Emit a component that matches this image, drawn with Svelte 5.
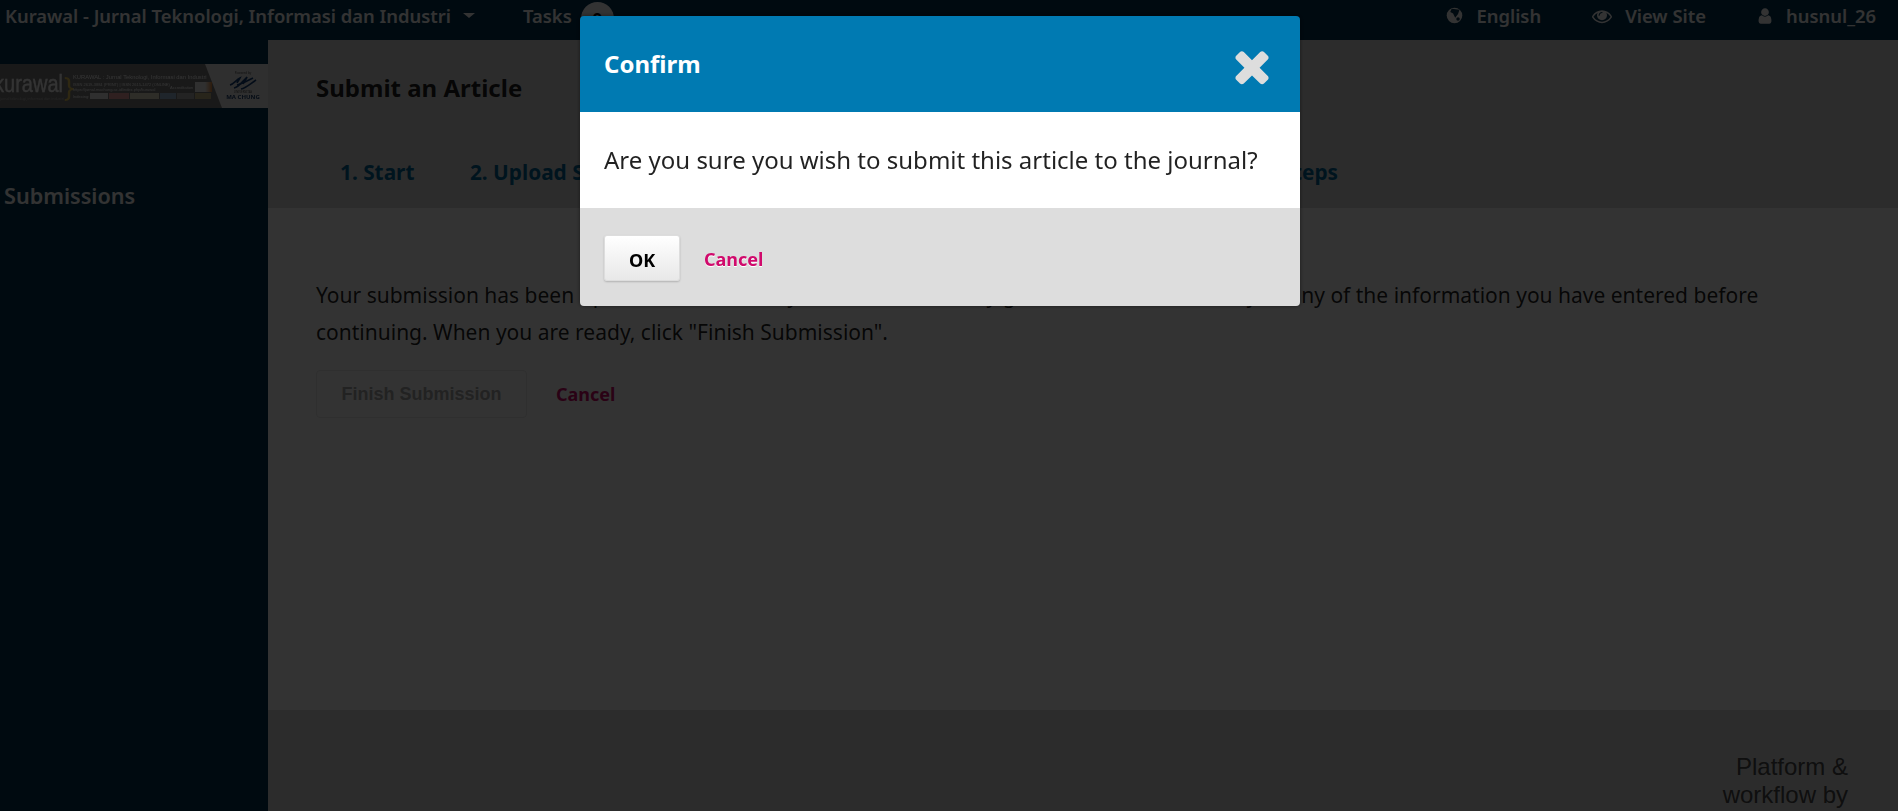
<script>
  let tabs = ["1. Start", "2. Upload Submission", "3. Enter Metadata", "4. Confirmation", "5. Next Steps"];
  let indexers = [
    { color: "#e8e8e8", width: 18 },
    { color: "#e9a0a0", width: 20 },
    { color: "#e4e0c8", width: 29 },
    { color: "#9db8d8", width: 16 },
    { color: "#b0b0b0", width: 17 },
    { color: "#c8b888", width: 16 }
  ];
</script>

<div class="page">
  <header class="topbar">
    <div class="topbar-left">
      <span class="journal">Kurawal - Jurnal Teknologi, Informasi dan Industri</span>
      <span class="caret"></span>
      <span class="tasks">Tasks</span>
      <span class="badge">0</span>
    </div>
    <div class="topbar-right">
      <span class="top-item">
        <svg class="globe" viewBox="0 0 24 24">
          <circle cx="12" cy="12" r="11" fill="#fff" />
          <path d="M8 2.5 L19 4 L17 10 L13 15 L10 9 L6 7 Z" fill="#00334f" />
          <circle cx="17" cy="17" r="2.5" fill="#00334f" />
        </svg>
        English
      </span>
      <span class="top-item site-item">
        <svg class="eye" viewBox="0 0 1792 1792">
          <path fill="#fff" d="M1664 960q-152-236-381-353 61 104 61 225 0 185-131.5 316.5t-316.5 131.5-316.5-131.5-131.5-316.5q0-121 61-225-229 117-381 353 133 205 333.5 326.5t434.5 121.5 434.5-121.5 333.5-326.5zm-720-384q0-20-14-34t-34-14q-125 0-214.5 89.5t-89.5 214.5q0 20 14 34t34 14 34-14 14-34q0-86 61-147t147-61q20 0 34-14t14-34zm848 384q0 34-20 69-140 230-376.5 368.5t-499.5 138.5-499.5-139-376.5-368q-20-35-20-69t20-69q140-229 376.5-368t499.5-139 499.5 139 376.5 368q20 35 20 69z" />
        </svg>
        View Site
      </span>
      <span class="top-item user-item">
        <svg class="user" viewBox="0 0 1792 1792">
          <path fill="#fff" d="M1536 1399q0 109-62.5 187t-150.5 78h-854q-88 0-150.5-78t-62.5-187q0-85 8.5-160.5t31.5-152 58.5-131 94-89 134.5-34.5q131 128 313 128t313-128q76 0 134.5 34.5t94 89 58.5 131 31.5 152 8.5 160.5zm-256-887q0 159-112.5 271.5t-271.5 112.5-271.5-112.5-112.5-271.5 112.5-271.5 271.5-112.5 271.5 112.5 112.5 271.5z" />
        </svg>
        husnul_26
      </span>
    </div>
  </header>

  <div class="layout">
    <aside class="sidebar">
      <div class="banner">
        <div class="banner-brand">
          <span class="banner-word">kurawal</span>
          <span class="banner-tag">jurnal teknologi, informasi dan industri</span>
        </div>
        <span class="banner-brace">&#125;</span>
        <div class="banner-info">
          <span class="banner-title">KURAWAL : Jurnal Teknologi, Informasi dan Industri</span>
          <div class="banner-mid">
            <div class="banner-lines">
              <span class="banner-small">ISSN 2619-3884 (PRINT) | ISSN 2615-1472 (ONLINE)</span>
              <span class="banner-small">https://jurnal.machung.ac.id/index.php/kurawal</span>
            </div>
            <span class="banner-small">Accreditation</span>
            <span class="banner-acc"></span>
          </div>
          <div class="banner-indexers">
            <span class="banner-small">Indexing:</span>
            {#each indexers as item}
              <span class="indexer" style="background: {item.color}; width: {item.width}px"></span>
            {/each}
          </div>
        </div>
        <div class="banner-side">
          <span class="banner-tiny">Powered by</span>
          <svg class="banner-logo" viewBox="0 0 28 15">
            <path d="M1 10 C5 9 7 5 11 3 C10 5 9 6 8 8" />
            <path d="M5 13 C10 12 13 7 18 2 C17 5 15 7 14 9" />
            <path d="M12 14 C17 13 21 9 27 5" />
            <path d="M8 10 C13 9 18 6 24 3" />
          </svg>
          <span class="banner-tiny">UNIVERSITAS</span>
          <span class="banner-school">MA CHUNG</span>
        </div>
      </div>
      <nav class="side-nav">Submissions</nav>
    </aside>

    <main class="main">
      <div class="main-head">
        <h1>Submit an Article</h1>
        <div class="tabs">
          {#each tabs as tab}
            <span class="tab">{tab}</span>
          {/each}
        </div>
      </div>
      <div class="main-body">
        <p>Your submission has been uploaded and is ready to be sent. You may go back to review and adjust any of the information you have entered before continuing. When you are ready, click "Finish Submission".</p>
        <div class="actions">
          <button class="finish" disabled>Finish Submission</button>
          <span class="main-cancel">Cancel</span>
        </div>
      </div>
      <footer class="footer">
        <div class="brand">Platform &amp; workflow by</div>
      </footer>
    </main>
  </div>
</div>

<div class="overlay">
  <div class="modal">
    <div class="modal-head">
      <span>Confirm</span>
      <svg class="close" viewBox="0 0 1792 1792">
        <path fill="#ddd" d="M1490 1322q0 40-28 68l-136 136q-28 28-68 28t-68-28l-294-294-294 294q-28 28-68 28t-68-28l-136-136q-28-28-28-68t28-68l294-294-294-294q-28-28-28-68t28-68l136-136q28-28 68-28t68 28l294 294 294-294q28-28 68-28t68 28l136 136q28 28 28 68t-28 68l-294 294 294 294q28 28 28 68z" />
      </svg>
    </div>
    <div class="modal-body">Are you sure you wish to submit this article to the journal?</div>
    <div class="modal-foot">
      <button class="ok">OK</button>
      <span class="modal-cancel">Cancel</span>
    </div>
  </div>
</div>

<style>
  :global(body) {
    overflow: hidden;
    font-family: "Noto Sans", sans-serif;
  }
  .page {
    height: 100vh;
    display: flex;
    flex-direction: column;
    background: #003250;
    overflow: hidden;
  }
  .topbar {
    height: 40px;
    flex-shrink: 0;
    display: flex;
    justify-content: space-between;
    align-items: center;
    padding: 0 22px 9px 5px;
    box-sizing: border-box;
    color: #fff;
    font-size: 18.4px;
    font-weight: 600;
  }
  .topbar-left,
  .topbar-right {
    display: flex;
    align-items: center;
  }
  .caret {
    margin-left: 12px;
    border-top: 5px solid #fff;
    border-left: 6px solid transparent;
    border-right: 6px solid transparent;
  }
  .tasks {
    margin-left: 48px;
  }
  .badge {
    width: 33px;
    height: 33px;
    margin: 5px 0 0 9px;
    border-radius: 50%;
    background: #fff;
    color: #000;
    display: flex;
    align-items: center;
    justify-content: center;
  }
  .top-item {
    display: flex;
    align-items: center;
    margin-left: 53px;
  }
  .site-item {
    margin-left: 51px;
  }
  .user-item {
    margin-left: 50px;
  }
  .globe {
    width: 17px;
    height: 17px;
    margin-right: 13px;
  }
  .eye {
    width: 20px;
    height: 20px;
    margin-right: 13px;
  }
  .user {
    width: 18px;
    height: 18px;
    margin-right: 12px;
  }
  .layout {
    flex: 1;
    display: flex;
    min-height: 0;
  }
  .sidebar {
    width: 268px;
    flex-shrink: 0;
    padding-top: 24px;
  }
  .banner {
    height: 44px;
    display: flex;
    align-items: center;
    background: #7d7d7d;
    color: #fff;
    overflow: hidden;
    filter: blur(0.4px);
    white-space: nowrap;
  }
  .banner-brand {
    width: 64px;
    flex-shrink: 0;
    display: flex;
    flex-direction: column;
    align-items: flex-end;
    overflow: hidden;
  }
  .banner-word {
    font-family: "Liberation Sans", sans-serif;
    font-size: 20px;
    line-height: 24px;
    margin-right: 1px;
    transform: scaleY(1.15);
    -webkit-text-stroke: 0.3px #fff;
  }
  .banner-tag {
    color: #bbb;
    font-size: 3.5px;
    line-height: 5px;
  }
  .banner-brace {
    color: #e8c85a;
    font-size: 27px;
    line-height: 1;
    width: 9px;
    flex-shrink: 0;
  }
  .banner-info {
    width: 132px;
    flex-shrink: 0;
    display: flex;
    flex-direction: column;
    gap: 1px;
  }
  .banner-title {
    font-family: "Liberation Sans", sans-serif;
    font-size: 5.8px;
    line-height: 8px;
  }
  .banner-mid {
    display: flex;
    align-items: center;
    gap: 2px;
  }
  .banner-lines {
    width: 95px;
    display: flex;
    flex-direction: column;
  }
  .banner-small {
    font-family: "Liberation Sans", sans-serif;
    font-size: 4px;
    line-height: 5px;
  }
  .banner-acc {
    width: 17px;
    height: 10px;
    flex-shrink: 0;
    background: linear-gradient(90deg, #eee 60%, #e08a40);
  }
  .banner-indexers {
    display: flex;
    align-items: center;
    gap: 1px;
  }
  .banner-indexers .banner-small {
    width: 17px;
  }
  .indexer {
    height: 6px;
    flex-shrink: 0;
  }
  .banner-side {
    flex: 1;
    height: 100%;
    background: #e8e8e8;
    clip-path: polygon(0 0, 100% 0, 100% 100%, 17px 100%);
    display: flex;
    flex-direction: column;
    align-items: center;
    justify-content: center;
    padding-left: 13px;
    box-sizing: border-box;
    color: #555;
  }
  .banner-tiny {
    font-size: 3px;
    line-height: 4px;
  }
  .banner-logo {
    width: 28px;
    height: 15px;
    fill: none;
    stroke: #123f78;
    stroke-width: 1.6;
  }
  .banner-school {
    color: #1c3f6f;
    font-size: 6px;
    line-height: 7px;
    font-weight: 700;
  }
  .side-nav {
    margin: 74px 0 0 4px;
    color: #fff;
    font-size: 21.6px;
    line-height: 28px;
    font-weight: 600;
  }
  .main {
    flex: 1;
    min-width: 0;
    display: flex;
    flex-direction: column;
    background: #fff;
    color: rgba(0, 0, 0, 0.87);
  }
  .main-head {
    height: 168px;
    flex-shrink: 0;
    background: #ddd;
    padding-left: 48px;
    box-sizing: border-box;
  }
  h1 {
    margin: 0;
    padding-top: 29px;
    font-size: 24px;
    line-height: 38px;
    font-weight: 700;
  }
  .tabs {
    display: flex;
    gap: 55.5px;
    padding: 51px 0 0 24px;
    color: #006798;
    font-size: 20.8px;
    line-height: 28px;
    font-weight: 700;
    white-space: nowrap;
  }
  .main-body {
    flex: 1;
    padding: 69px 48px 0;
    font-size: 21px;
    line-height: 37px;
    box-sizing: border-box;
  }
  .main-body p {
    margin: 0;
  }
  .actions {
    display: flex;
    align-items: center;
    gap: 29px;
    margin-top: 19px;
  }
  .finish {
    width: 211px;
    height: 48px;
    border: 1px solid #e8e8e8;
    border-radius: 4px;
    background: #fff;
    color: #aaa;
    font-family: "Liberation Sans", sans-serif;
    font-size: 18px;
    font-weight: 700;
  }
  .main-cancel {
    color: #d00a6c;
    font-size: 18px;
    font-weight: 700;
  }
  .footer {
    height: 101px;
    flex-shrink: 0;
    background: #ddd;
    display: flex;
    justify-content: flex-end;
    padding: 43px 50px 0 0;
    box-sizing: border-box;
  }
  .brand {
    width: 140px;
    text-align: right;
    color: #4a4a4a;
    font-family: "Liberation Sans", sans-serif;
    font-size: 24px;
    line-height: 28px;
  }
  .overlay {
    position: fixed;
    inset: 0;
    background: rgba(0, 0, 0, 0.8);
    display: flex;
    justify-content: center;
    align-items: flex-start;
    padding: 16px 18px 0 0;
    box-sizing: border-box;
  }
  .modal {
    width: 720px;
    border-radius: 4px;
    overflow: hidden;
    box-shadow: 0 0 4px rgba(0, 0, 0, 0.5);
  }
  .modal-head {
    height: 96px;
    display: flex;
    justify-content: space-between;
    align-items: center;
    padding: 0 24px 2px;
    background: #007ab2;
    color: #fff;
    font-size: 24px;
    font-weight: 700;
    box-sizing: border-box;
  }
  .close {
    width: 50px;
    height: 50px;
    margin: 5px -1px 0 0;
  }
  .modal-body {
    height: 96px;
    display: flex;
    align-items: center;
    padding: 0 24px 2px;
    background: #fff;
    color: rgba(0, 0, 0, 0.87);
    font-size: 24px;
    box-sizing: border-box;
  }
  .modal-foot {
    height: 98px;
    display: flex;
    align-items: center;
    gap: 24px;
    padding: 2px 24px 0;
    background: #ddd;
    box-sizing: border-box;
  }
  .ok {
    width: 76px;
    height: 46px;
    padding: 3px 0 0;
    border: 1px solid #ddd;
    border-radius: 3px;
    background: linear-gradient(#fff, #e8e8e8);
    box-shadow: 0 1px 2px rgba(0, 0, 0, 0.2);
    color: #000;
    font-family: "Noto Sans", sans-serif;
    font-size: 18px;
    font-weight: 700;
  }
  .modal-cancel {
    padding-top: 2px;
    color: #d00a6c;
    font-size: 18px;
    font-weight: 700;
    text-shadow: 0 1px 0 #fff;
  }
</style>
